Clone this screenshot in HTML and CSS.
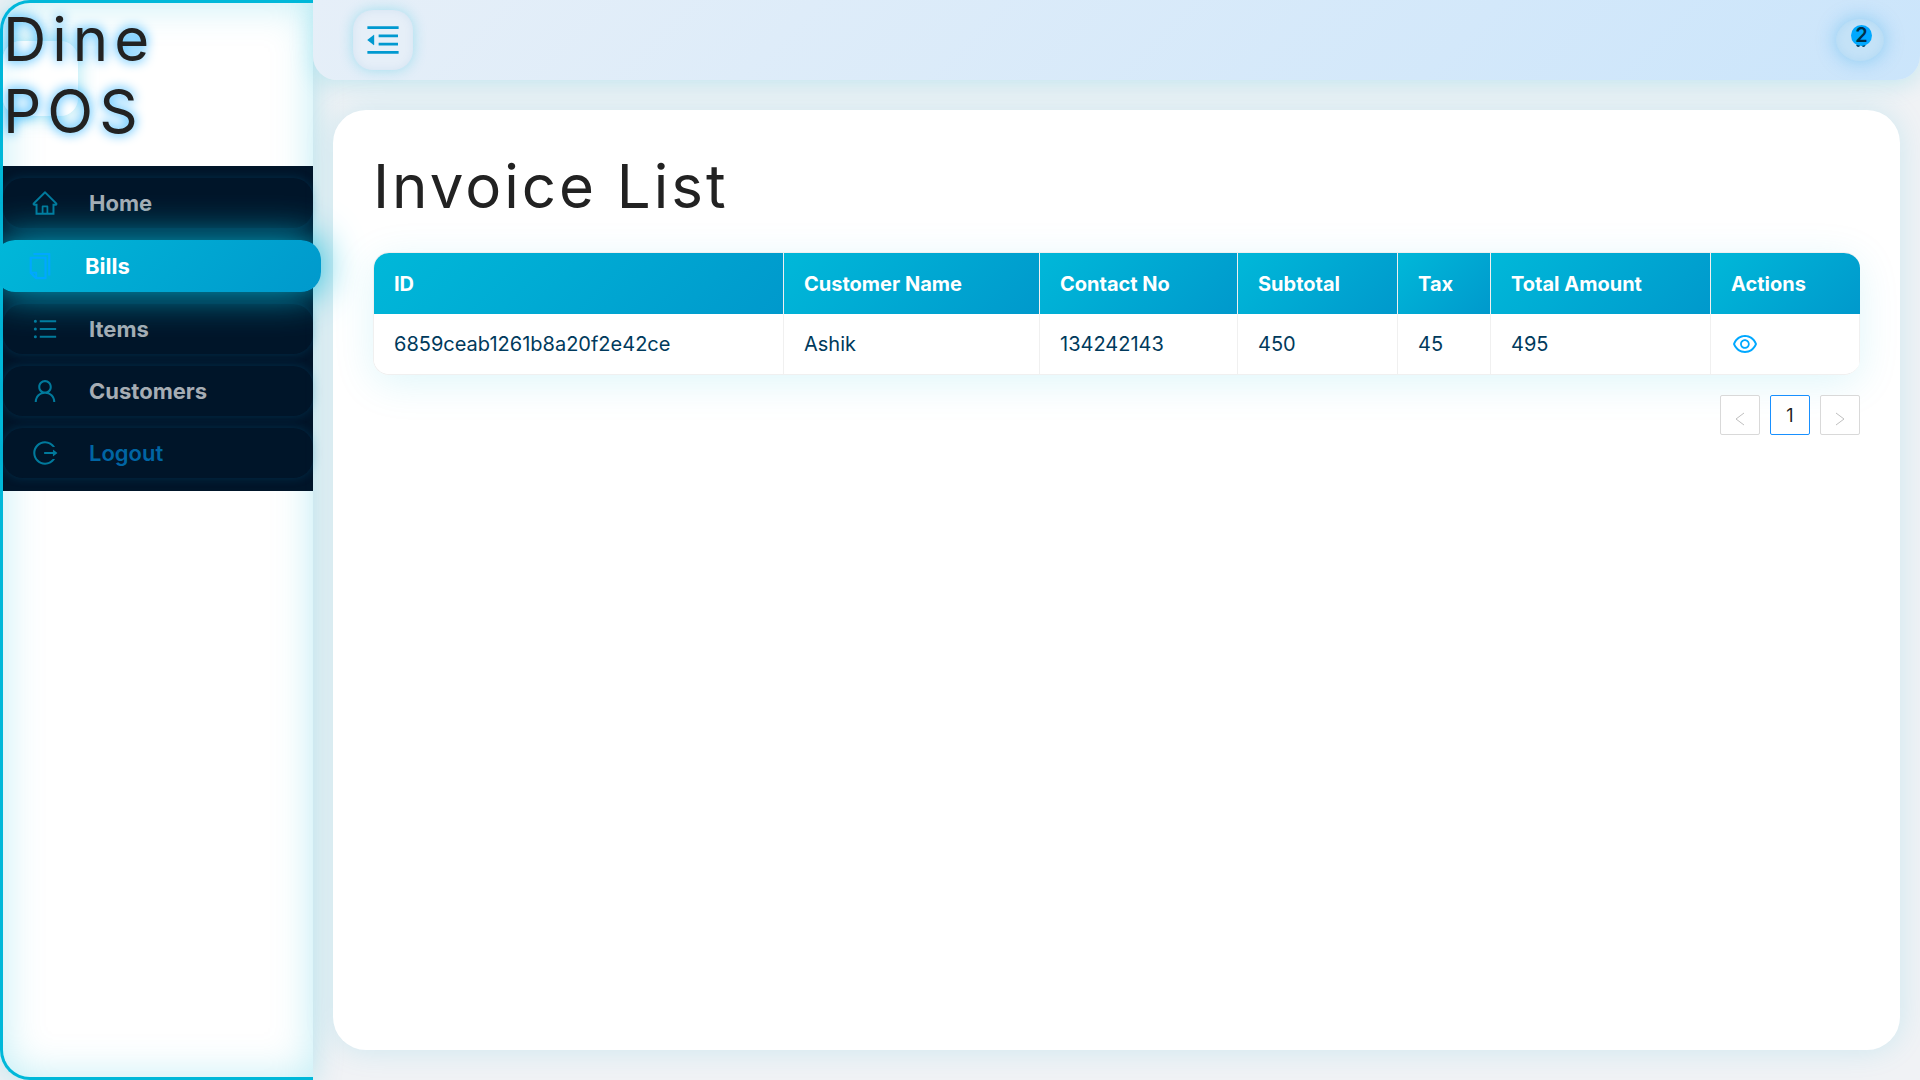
FILE: index.html
```html
<!DOCTYPE html>
<html lang="en">
<head>
<meta charset="utf-8">
<title>Dine POS</title>
<link rel="stylesheet" href="styles.css">
</head>
<body>
<div class="layout">
  <aside class="sidebar">
    <div class="logo"><span class="logo-plate"></span><h1 class="logo-text">Dine POS</h1></div>
    <nav class="menu">
      <a class="menu-item" href="#home">
        <svg class="icon" viewBox="0 0 1024 1024" aria-hidden="true"><path d="M946.5 505L560.1 118.8l-25.9-25.9a31.5 31.5 0 00-44.4 0L77.5 505a63.9 63.9 0 00-18.8 46c.4 35.2 29.7 63.3 64.9 63.3h42.5V940h691.8V614.3h43.4c17.1 0 33.2-6.7 45.3-18.8a63.6 63.6 0 0018.7-45.3c0-17-6.7-33.1-18.8-45.2zM568 868H456V664h112v204zm217.9-325.7V868H632V640c0-22.1-17.9-40-40-40H432c-22.1 0-40 17.9-40 40v228H238.1V542.3h-96l370-369.7 23.1 23.1L882 542.3h-96.1z"/></svg>
        <span>Home</span>
      </a>
      <a class="menu-item active" href="#bills" aria-current="page">
        <svg class="icon" viewBox="0 0 1024 1024" aria-hidden="true"><path d="M832 64H296c-4.4 0-8 3.6-8 8v56c0 4.4 3.6 8 8 8h496v688c0 4.4 3.6 8 8 8h56c4.4 0 8-3.6 8-8V96c0-17.7-14.3-32-32-32zM704 192H192c-17.7 0-32 14.3-32 32v530.7c0 8.5 3.4 16.6 9.4 22.6l173.3 173.3c2.2 2.2 4.7 4 7.4 5.5v1.9h4.2c3.5 1.3 7.2 2 11 2H704c17.7 0 32-14.3 32-32V224c0-17.7-14.3-32-32-32zM350 856.2L263.9 770H350v86.2zM664 888H414V746c0-22.1-17.9-40-40-40H232V264h432v624z"/></svg>
        <span>Bills</span>
      </a>
      <a class="menu-item" href="#items">
        <svg class="icon" viewBox="0 0 1024 1024" aria-hidden="true"><path d="M912 192H328c-4.4 0-8 3.6-8 8v56c0 4.4 3.6 8 8 8h584c4.4 0 8-3.6 8-8v-56c0-4.4-3.6-8-8-8zm0 284H328c-4.4 0-8 3.6-8 8v56c0 4.4 3.6 8 8 8h584c4.4 0 8-3.6 8-8v-56c0-4.4-3.6-8-8-8zm0 284H328c-4.4 0-8 3.6-8 8v56c0 4.4 3.6 8 8 8h584c4.4 0 8-3.6 8-8v-56c0-4.4-3.6-8-8-8zM104 228a56 56 0 10112 0 56 56 0 10-112 0zm0 284a56 56 0 10112 0 56 56 0 10-112 0zm0 284a56 56 0 10112 0 56 56 0 10-112 0z"/></svg>
        <span>Items</span>
      </a>
      <a class="menu-item" href="#customers">
        <svg class="icon" viewBox="0 0 1024 1024" aria-hidden="true"><path d="M858.5 763.6a374 374 0 00-80.6-119.5 375.63 375.63 0 00-119.5-80.6c-.4-.2-.8-.3-1.2-.5C719.5 518 760 444.7 760 362c0-137-111-248-248-248S264 225 264 362c0 82.7 40.5 156 102.8 201.1-.4.2-.8.3-1.2.5-44.8 18.9-85 46-119.5 80.6a375.63 375.63 0 00-80.6 119.5A371.7 371.7 0 00136 901.8a8 8 0 008 8.2h60c4.4 0 7.9-3.5 8-7.8 2-77.2 33-149.5 87.8-204.3 56.7-56.7 132-87.9 212.2-87.9s155.5 31.2 212.2 87.9C779 752.7 810 825 812 902.2c.1 4.4 3.6 7.8 8 7.8h60a8 8 0 008-8.2c-1-47.8-10.9-94.3-29.5-138.2zM512 534c-45.9 0-89.1-17.9-121.6-50.4S340 407.9 340 362c0-45.9 17.9-89.1 50.4-121.6S466.1 190 512 190s89.1 17.9 121.6 50.4S684 316.1 684 362c0 45.9-17.9 89.1-50.4 121.6S557.9 534 512 534z"/></svg>
        <span>Customers</span>
      </a>
      <a class="menu-item logout" href="#logout">
        <svg class="icon" viewBox="0 0 1024 1024" aria-hidden="true"><path d="M868 732h-70.3c-4.8 0-9.3 2.1-12.3 5.8-7 8.5-14.5 16.7-22.4 24.5a353.84 353.84 0 01-112.7 75.9A352.8 352.8 0 01512.4 866c-47.9 0-94.3-9.4-137.9-27.8a353.84 353.84 0 01-112.7-75.9 353.28 353.28 0 01-76-112.5C167.3 606.2 158 559.9 158 512s9.4-94.2 27.8-137.8c17.8-42.1 43.4-80 76-112.5s70.5-58.1 112.7-75.9c43.6-18.4 90-27.8 137.9-27.8 47.9 0 94.3 9.3 137.9 27.8 42.2 17.8 80.1 43.4 112.7 75.9 7.9 7.9 15.3 16.1 22.4 24.5 3 3.7 7.6 5.8 12.3 5.8H868c6.3 0 10.2-7 6.7-12.3C798 160.5 663.8 81.6 511.3 82 271.7 82.6 79.6 277.1 82 516.4 84.4 751.9 276.2 942 512.4 942c152.1 0 285.7-78.8 362.3-197.7 3.4-5.3-.4-12.3-6.7-12.3zm88.9-226.3L815 393.7c-5.3-4.2-13-.4-13 6.3v76H488c-4.4 0-8 3.6-8 8v56c0 4.4 3.6 8 8 8h314v76c0 6.7 7.8 10.5 13 6.3l141.9-112a8 8 0 000-12.6z"/></svg>
        <span>Logout</span>
      </a>
    </nav>
  </aside>
  <div class="main">
    <header class="topbar">
      <button class="fold" type="button" aria-label="Collapse menu">
        <svg viewBox="0 0 1024 1024" aria-hidden="true"><path d="M408 442h480c4.4 0 8-3.6 8-8v-56c0-4.4-3.6-8-8-8H408c-4.4 0-8 3.6-8 8v56c0 4.4 3.6 8 8 8zm-8 204c0 4.4 3.6 8 8 8h480c4.4 0 8-3.6 8-8v-56c0-4.4-3.6-8-8-8H408c-4.4 0-8 3.6-8 8v56zm504-486H120c-4.4 0-8 3.6-8 8v56c0 4.4 3.6 8 8 8h784c4.4 0 8-3.6 8-8v-56c0-4.4-3.6-8-8-8zm0 632H120c-4.4 0-8 3.6-8 8v56c0 4.4 3.6 8 8 8h784c4.4 0 8-3.6 8-8v-56c0-4.4-3.6-8-8-8zM115.4 518.9L271.7 642c5.8 4.6 14.4.5 14.4-6.9V388.9c0-7.4-8.5-11.5-14.4-6.9L115.4 505.1a8.74 8.74 0 000 13.8z"/></svg>
      </button>
      <button class="cart" type="button" aria-label="Cart">
        <svg viewBox="0 0 16 16" aria-hidden="true"><path d="M0 2h3l2 8h8" fill="none" stroke="currentColor" stroke-width="1"/><path d="M3 10h11v2H3z"/><circle cx="6" cy="14" r="2"/><circle cx="12" cy="14" r="2"/></svg>
        <span class="badge">2</span>
      </button>
    </header>
    <main class="card">
      <h2 class="title">Invoice List</h2>
      <table class="invoices">
        <colgroup><col class="c-id"><col class="c-name"><col class="c-contact"><col class="c-sub"><col class="c-tax"><col class="c-total"><col class="c-act"></colgroup>
        <thead><tr><th>ID</th><th>Customer Name</th><th>Contact No</th><th>Subtotal</th><th>Tax</th><th>Total Amount</th><th>Actions</th></tr></thead>
        <tbody><tr><td>6859ceab1261b8a20f2e42ce</td><td>Ashik</td><td>134242143</td><td>450</td><td>45</td><td>495</td>
          <td><button class="view" type="button" aria-label="View bill"><svg viewBox="0 0 1024 1024" aria-hidden="true"><path d="M942.2 486.2C847.4 286.5 704.1 186 512 186c-192.2 0-335.4 100.5-430.2 300.3a60.3 60.3 0 000 51.5C176.6 737.5 319.9 838 512 838c192.2 0 335.4-100.5 430.2-300.3 7.7-16.2 7.7-35 0-51.5zM512 766c-161.3 0-279.4-81.8-362.7-254C232.6 339.8 350.7 258 512 258c161.3 0 279.4 81.8 362.7 254C791.5 684.2 673.4 766 512 766zm-4-430c-97.2 0-176 78.8-176 176s78.8 176 176 176 176-78.8 176-176-78.8-176-176-176zm0 288c-61.9 0-112-50.1-112-112s50.1-112 112-112 112 50.1 112 112-50.1 112-112 112z"/></svg></button></td></tr></tbody>
      </table>
      <nav class="pager" aria-label="Pages">
        <button class="page" type="button" disabled aria-label="Previous page"><svg viewBox="0 0 10 14" aria-hidden="true"><path d="M9 1L1 7l8 6"/></svg></button>
        <button class="page current" type="button">1</button>
        <button class="page" type="button" disabled aria-label="Next page"><svg viewBox="0 0 10 14" aria-hidden="true"><path d="M1 1l8 6-8 6"/></svg></button>
      </nav>
    </main>
  </div>
</div>
</body>
</html>
```
FILE: styles.css
```css
* { box-sizing: border-box; }
body {
  margin: 0;
  font-family: Inter, "Liberation Sans", sans-serif;
  font-size: 20px;
  color: #003a5c;
  background: #f0f2f5;
}
button { font: inherit; padding: 0; cursor: pointer; }
svg { display: block; fill: currentColor; }
.layout { display: flex; min-height: 100vh; overflow: hidden; }

.sidebar {
  flex: 0 0 313px;
  border: 3px solid #00b8d9;
  border-right: 0;
  border-radius: 30px 0 0 30px;
  background: #fff;
  box-shadow: 0 0 30px rgba(0, 184, 217, 0.25), inset 0 0 40px rgba(0, 184, 217, 0.25);
}
.logo { position: relative; height: 163px; }
.logo-plate {
  position: absolute;
  left: 0;
  top: 38px;
  width: 75px;
  height: 75px;
  border-radius: 18px;
  background: rgba(255, 255, 255, 0.5);
  box-shadow: 0 0 20px rgba(0, 184, 217, 0.35), inset 0 0 12px rgba(255, 255, 255, 0.9);
}
.logo-text {
  position: relative;
  width: 200px;
  margin: 0;
  font-size: 60px;
  line-height: 72px;
  font-weight: 400;
  letter-spacing: 6px;
  color: #222;
  text-shadow: 0 0 12px #00a2ff;
}
.menu {
  display: flex;
  flex-direction: column;
  gap: 12px;
  min-height: 325px;
  padding: 12px 0;
  background: #001529;
}
.menu-item {
  display: flex;
  align-items: center;
  gap: 30px;
  height: 50px;
  padding-left: 28px;
  border-radius: 20px;
  font-size: 22px;
  font-weight: 700;
  color: #a6adb4;
  text-decoration: none;
  box-shadow: 0 0 10px rgba(0, 120, 170, 0.25);
}
.menu-item .icon { width: 28px; height: 28px; color: #007a9c; }
.menu-item.active {
  position: relative;
  z-index: 2;
  height: 52px;
  margin: 0 -8px;
  padding-left: 30px;
  color: #fff;
  background: linear-gradient(135deg, #00b8d9, #0099cc);
  box-shadow: 0 0 40px #00b8d9;
}
.menu-item.active .icon { width: 30px; height: 30px; color: #00a8ff; }
.menu-item.logout { color: #0065a3; font-weight: 600; }

.main { flex: 1; min-width: 0; display: flex; flex-direction: column; }
.topbar {
  display: flex;
  align-items: center;
  justify-content: space-between;
  height: 80px;
  padding: 0 36px 0 40px;
  border-radius: 0 0 24px 24px;
  background: linear-gradient(135deg, #e6eff8, #cbe5fb);
  box-shadow: 0 4px 24px rgba(0, 184, 217, 0.2);
}
.fold {
  display: grid;
  place-items: center;
  width: 60px;
  height: 60px;
  border: 0;
  border-radius: 20px;
  color: #0099d0;
  background: #e6eff8;
  box-shadow: 0 0 14px rgba(0, 184, 217, 0.3), inset 0 0 10px rgba(0, 100, 180, 0.08);
}
.fold svg { width: 40px; height: 40px; }
.cart {
  position: relative;
  display: grid;
  place-items: center;
  width: 48px;
  height: 42px;
  border: 0;
  border-radius: 50%;
  color: #003a5c;
  background: #c4e2f7;
  box-shadow: 0 0 20px rgba(0, 150, 230, 0.35), inset 0 0 8px rgba(0, 150, 230, 0.1);
}
.cart svg { width: 14px; height: 18px; }
.badge {
  position: absolute;
  top: 6px;
  left: 15px;
  width: 21px;
  height: 21px;
  border-radius: 50%;
  background: #00a8ff;
  color: #003049;
  font-size: 20px;
  line-height: 20px;
  font-weight: 600;
  text-align: center;
}

.card {
  flex: 1;
  margin: 30px 20px;
  padding: 40px;
  border-radius: 33px;
  background: #fff;
  box-shadow: 0 0 30px rgba(0, 184, 217, 0.15);
}
.title {
  margin: 0 0 30px;
  font-size: 60px;
  line-height: 72px;
  font-weight: 400;
  letter-spacing: 3px;
  color: #222;
}
.invoices {
  width: 100%;
  table-layout: fixed;
  border-collapse: separate;
  border-spacing: 0;
  border: 1px solid #f0f0f0;
  border-right: 0;
  border-radius: 16px;
  overflow: hidden;
  box-shadow: 0 8px 40px rgba(0, 184, 217, 0.13);
}
.invoices th, .invoices td {
  height: 60px;
  padding: 0 20px;
  border-right: 1px solid #f0f0f0;
  text-align: left;
  white-space: nowrap;
}
.invoices th {
  height: 61px;
  color: #fff;
  font-weight: 700;
  background: linear-gradient(135deg, #00b8d9, #0099cc);
}
.invoices th:last-child { border-right: 0; }
.invoices td { background: #fff; }
.c-id { width: 410px; }
.c-name { width: 256px; }
.c-contact { width: 198px; }
.c-sub { width: 160px; }
.c-tax { width: 93px; }
.c-total { width: 220px; }
.c-act { width: 149px; }
.view { display: block; border: 0; background: none; color: #00a8ff; }
.view svg { width: 28px; height: 28px; }

.pager { display: flex; justify-content: flex-end; gap: 10px; margin-top: 20px; }
.page {
  display: grid;
  place-items: center;
  width: 40px;
  height: 40px;
  border: 1px solid #d9d9d9;
  border-radius: 2px;
  background: #fff;
  color: #bfbfbf;
}
.page svg { width: 10px; height: 14px; margin-top: 8px; fill: none; stroke: currentColor; }
.page.current { border-color: #1890ff; color: #222; font-size: 18px; }
```
